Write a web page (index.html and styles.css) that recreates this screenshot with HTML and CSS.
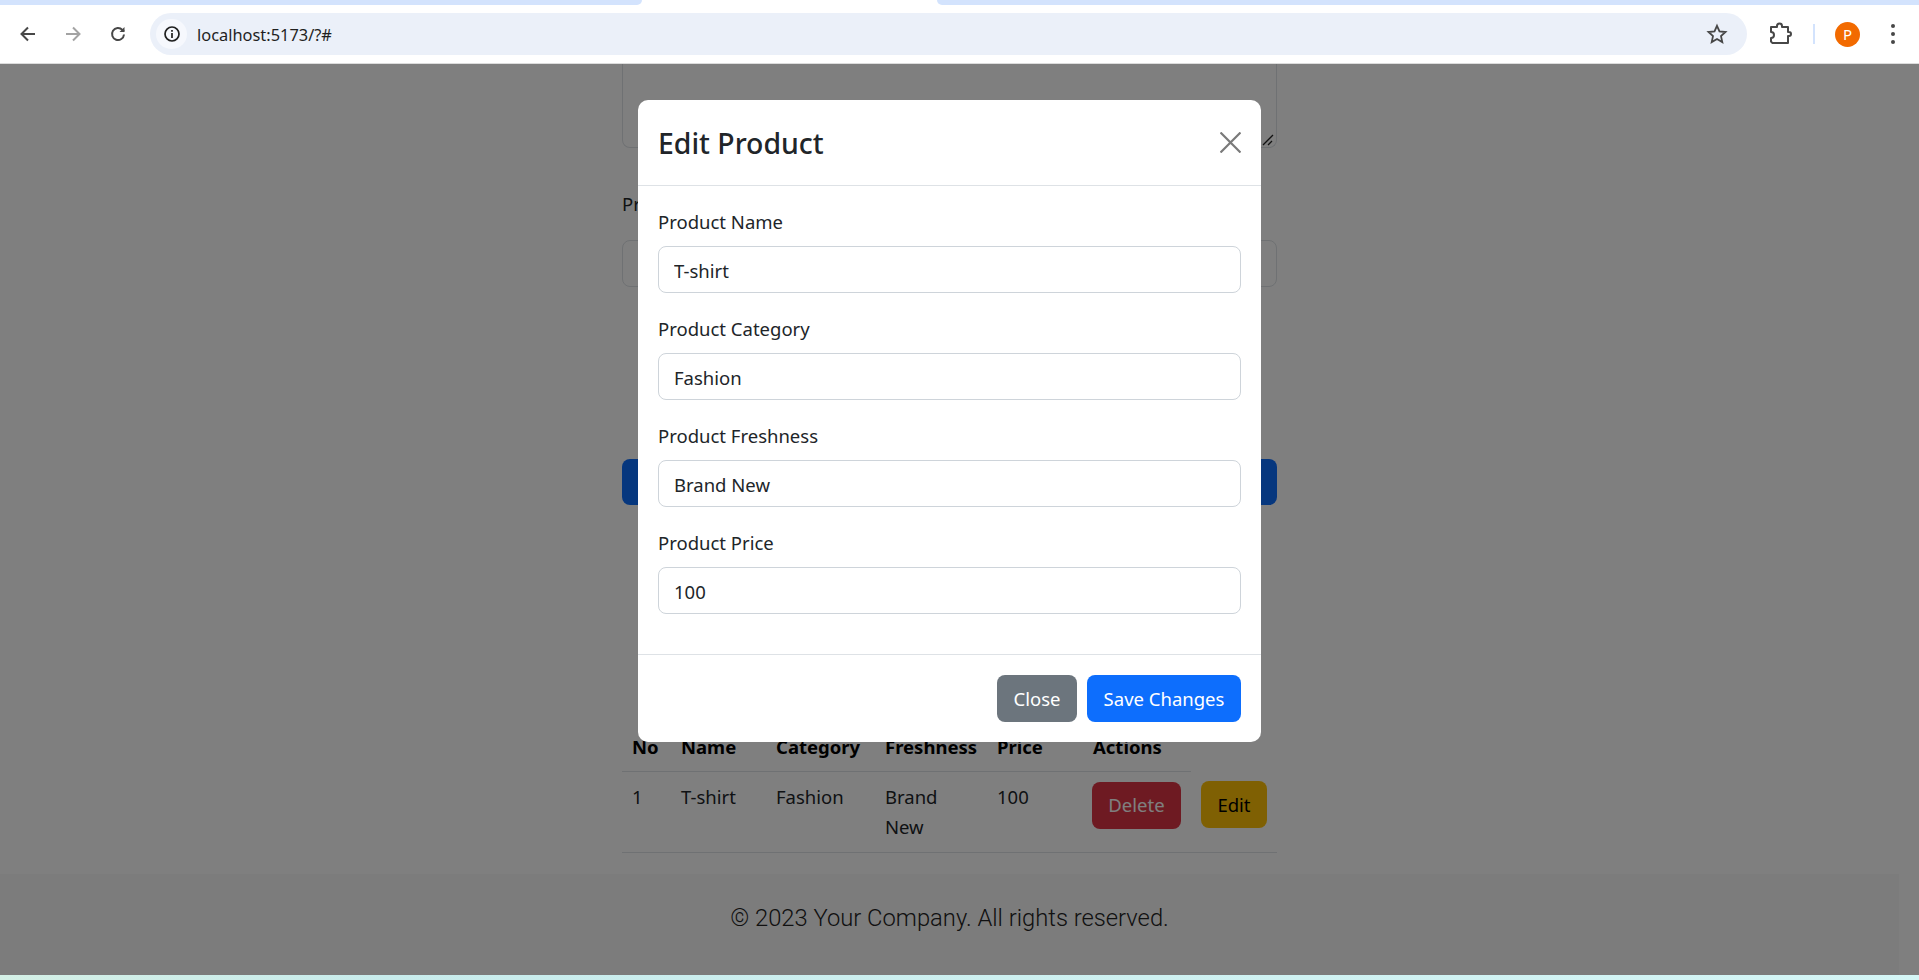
FILE: index.html
```html
<!DOCTYPE html>
<html lang="en">
<head>
    <meta charset="UTF-8">
    <title>Edit Product</title>
    <link rel="stylesheet" href="styles.css">
</head>
<body>
    <div class="tabstrip">
        <div class="tab-side tab-left"></div>
        <div class="tab-active"></div>
        <div class="tab-side tab-right"></div>
    </div>

    <header class="toolbar">
        <button class="tool-btn" aria-label="Back">
            <svg width="20" height="20" viewBox="0 0 20 20" fill="none" stroke="#474747" stroke-width="2"><path d="M17 10H4M10 3.5 3.500 10l6.500 6.500"/></svg>
        </button>
        <button class="tool-btn" aria-label="Forward">
            <svg width="20" height="20" viewBox="0 0 20 20" fill="none" stroke="#a3a3a3" stroke-width="2"><path d="M3 10h13M10 3.5l6.500 6.500-6.500 6.500"/></svg>
        </button>
        <button class="tool-btn" aria-label="Reload">
            <svg width="20" height="20" viewBox="0 0 20 20" fill="none" stroke="#474747" stroke-width="2"><path d="M16 10.500a6 6 0 1 1-1.600-4.600L16 7.500"/><path d="M16.500 3v5h-5" stroke="none" fill="#474747"/></svg>
        </button>
        <div class="omnibox">
            <span class="site-info">
                <svg width="18" height="18" viewBox="0 0 18 18" fill="none" stroke="#1f1f1f" stroke-width="1.7"><circle cx="9" cy="9" r="7"/><path d="M9 8v5M9 5v1.800"/></svg>
            </span>
            <span class="url">localhost:5173/?#</span>
            <svg class="star" width="22" height="22" viewBox="0 0 22 22" fill="none" stroke="#474747" stroke-width="1.8"><path d="M11 2.800l2.500 5.600 6 .6-4.500 4.100 1.300 6-5.300-3.100-5.300 3.100 1.300-6L2.500 9l6-.6z"/></svg>
        </div>
        <svg class="ext-icon" width="24" height="24" viewBox="0 0 24 24" fill="none" stroke="#474747" stroke-width="2" stroke-linejoin="round"><path d="M3 5h6V4a2.500 2.500 0 0 1 5 0v1h6v5h1a2 2 0 0 1 0 4h-1v7H4.500L3 19.500V16a3 3 0 0 0 0-6z"/></svg>
        <span class="tool-sep"></span>
        <span class="avatar">P</span>
        <span class="menu-dots"><i></i><i></i><i></i></span>
    </header>

    <main class="page">
        <div class="page-content">
            <div class="container">
                <div class="fake-textarea">
                    <svg class="resize-grip" width="12" height="12" viewBox="0 0 12 12" stroke="#222" stroke-width="1.3"><path d="M1 11 11 1M6 11l4-4"/></svg>
                </div>

                <label class="page-label">Pr</label>
                <div class="fake-input"></div>

                <div class="page-submit"></div>

                <table class="product-table">
                    <colgroup>
                        <col class="col-no">
                        <col class="col-name">
                        <col class="col-cat">
                        <col class="col-fresh">
                        <col class="col-price">
                        <col class="col-actions">
                        <col>
                    </colgroup>
                    <thead>
                        <tr>
                            <th>No</th>
                            <th>Name</th>
                            <th>Category</th>
                            <th>Freshness</th>
                            <th>Price</th>
                            <th>Actions</th>
                        </tr>
                    </thead>
                    <tbody>
                        <tr>
                            <td>1</td>
                            <td>T-shirt</td>
                            <td>Fashion</td>
                            <td>Brand New</td>
                            <td>100</td>
                            <td class="cell-delete"><button class="btn btn-danger">Delete</button></td>
                            <td class="cell-edit"><button class="btn btn-warning">Edit</button></td>
                        </tr>
                    </tbody>
                </table>
            </div>

            <footer class="page-footer">© 2023 Your Company. All rights reserved.</footer>
        </div>

        <div class="backdrop"></div>

        <div class="modal">
            <div class="modal-header">
                <h5 class="modal-title">Edit Product</h5>
                <svg class="modal-close" width="21" height="21" viewBox="0 0 21 21" stroke="#7a7a7a" stroke-width="2.2"><path d="M.5.5l20 20M20.500.5l-20 20"/></svg>
            </div>
            <div class="modal-body">
                <div class="field">
                    <label for="pname">Product Name</label>
                    <input id="pname" type="text" value="T-shirt">
                </div>
                <div class="field">
                    <label for="pcat">Product Category</label>
                    <input id="pcat" type="text" value="Fashion">
                </div>
                <div class="field">
                    <label for="pfresh">Product Freshness</label>
                    <input id="pfresh" type="text" value="Brand New">
                </div>
                <div class="field">
                    <label for="pprice">Product Price</label>
                    <input id="pprice" type="text" value="100">
                </div>
            </div>
            <div class="modal-footer">
                <button class="btn btn-secondary">Close</button>
                <button class="btn btn-primary">Save Changes</button>
            </div>
        </div>
    </main>

    <div class="bottom-strip"></div>
</body>
</html>
```
FILE: styles.css
```css
* {
    box-sizing: border-box;
}
html, body {
    margin: 0;
    height: 100%;
    overflow: hidden;
}
body {
    display: flex;
    flex-direction: column;
    font-family: "Noto Sans", "Open Sans", sans-serif;
    font-size: 18.5px;
    color: #212529;
    background: #fff;
}

/* browser chrome */
.tabstrip {
    display: flex;
    height: 5px;
    background: #fff;
}
.tab-side {
    background: #d3e3fd;
}
.tab-left {
    width: 642px;
    border-bottom-right-radius: 8px;
}
.tab-active {
    width: 295px;
}
.tab-right {
    flex: 1;
    border-bottom-left-radius: 8px;
}
.toolbar {
    display: flex;
    align-items: center;
    height: 59px;
    padding: 0 0 0 5px;
    border-bottom: 1px solid #dcdcdc;
    background: #fff;
}
.tool-btn {
    display: flex;
    align-items: center;
    justify-content: center;
    width: 45px;
    height: 40px;
    padding: 0;
    border: none;
    background: none;
}
.omnibox {
    display: flex;
    align-items: center;
    width: 1597px;
    height: 42px;
    margin-left: 10px;
    padding: 0 19px 0 6px;
    border-radius: 21px;
    background: #ebf0f9;
}
.site-info {
    display: flex;
    align-items: center;
    justify-content: center;
    width: 31px;
    height: 30px;
    border-radius: 15px;
    background: #f6f8fd;
}
.url {
    flex: 1;
    margin-left: 10px;
    font-size: 16.4px;
    color: #1f1f1f;
}
.ext-icon {
    margin-left: 21px;
}
.tool-sep {
    width: 2px;
    height: 20px;
    margin-left: 21px;
    background: #d3e3fd;
}
.avatar {
    display: flex;
    align-items: center;
    justify-content: center;
    width: 25px;
    height: 25px;
    margin-left: 20px;
    border-radius: 50%;
    background: #f26a00;
    color: #fff;
    font-size: 15px;
}
.menu-dots {
    display: flex;
    flex-direction: column;
    gap: 4px;
    margin-left: 31px;
}
.menu-dots i {
    width: 4px;
    height: 4px;
    border-radius: 50%;
    background: #474747;
}

/* page under the modal */
.page {
    position: relative;
    flex: 1;
    overflow: hidden;
    background: #fff;
}
.page-content {
    width: 1899px;
}
.container {
    width: 655px;
    margin: 0 auto;
}
.fake-textarea {
    position: relative;
    height: 84px;
    border: 1px solid #dee2e6;
    border-top: none;
    border-radius: 0 0 8px 8px;
}
.resize-grip {
    position: absolute;
    right: 2px;
    bottom: 1px;
}
.page-label {
    display: block;
    margin-top: 41px;
    line-height: 30px;
}
.fake-input {
    height: 47px;
    margin-top: 21px;
    border: 1px solid #dee2e6;
    border-radius: 8px;
}
.page-submit {
    height: 46px;
    margin-top: 172px;
    border-radius: 8px;
    background: #0d6efd;
}
.product-table {
    width: 655px;
    margin-top: 219px;
    border-collapse: collapse;
    table-layout: fixed;
    line-height: 30px;
}
.product-table th {
    height: 47px;
    padding: 0 10px;
    border-bottom: 1px solid #dee2e6;
    color: #000;
    text-align: left;
}
.product-table td {
    height: 81px;
    padding: 10px 10px 0;
    border-bottom: 1px solid #dee2e6;
    vertical-align: top;
}
.product-table .cell-delete {
    padding: 10px 0 0 9px;
}
.product-table .cell-edit {
    padding: 10px 0 0 10px;
}
.col-no { width: 49px; }
.col-name { width: 95px; }
.col-cat { width: 109px; }
.col-fresh { width: 112px; }
.col-price { width: 96px; }
.col-actions { width: 108px; }

.page-footer {
    height: 102px;
    margin-top: 21px;
    padding-top: 29px;
    background: #f8f8f8;
    font-family: Roboto, sans-serif;
    font-weight: 300;
    font-size: 23.75px;
    line-height: 30px;
    color: #222;
    text-align: center;
}

.backdrop {
    position: absolute;
    inset: 0;
    background: rgba(0, 0, 0, .5);
}

/* modal */
.modal {
    position: absolute;
    top: 36px;
    left: 638px;
    width: 623px;
    height: 642px;
    border-radius: 10px;
    background: #fff;
}
.modal-header {
    display: flex;
    align-items: center;
    justify-content: space-between;
    height: 86px;
    padding: 0 20px;
    border-bottom: 1px solid #dee2e6;
}
.modal-title {
    margin: 0;
    font-size: 28.4px;
    font-weight: 500;
    color: #212529;
}
.modal-body {
    display: flex;
    flex-direction: column;
    gap: 20px;
    height: 468px;
    padding: 20px;
}
.field label {
    display: block;
    height: 30px;
    margin-bottom: 10px;
    line-height: 32px;
}
.field input {
    display: block;
    width: 100%;
    height: 47px;
    padding: 2px 15px 0;
    border: 1px solid #ced4da;
    border-radius: 8px;
    font: inherit;
    color: #212529;
}
.modal-footer {
    display: flex;
    justify-content: flex-end;
    gap: 10px;
    padding: 20px;
    border-top: 1px solid #dee2e6;
}
.btn {
    height: 47px;
    padding: 0;
    border: none;
    border-radius: 8px;
    font: inherit;
    color: #fff;
}
.btn-primary { width: 154px; background: #0d6efd; }
.btn-secondary { width: 80px; background: #6c757d; }
.btn-danger { width: 89px; background: #dc3545; }
.btn-warning { width: 66px; background: #ffc107; color: #000; }

.bottom-strip {
    height: 5px;
    background: linear-gradient(90deg, #d4f0e6, #c8ecec 20%, #d4f6f6);
}
```
